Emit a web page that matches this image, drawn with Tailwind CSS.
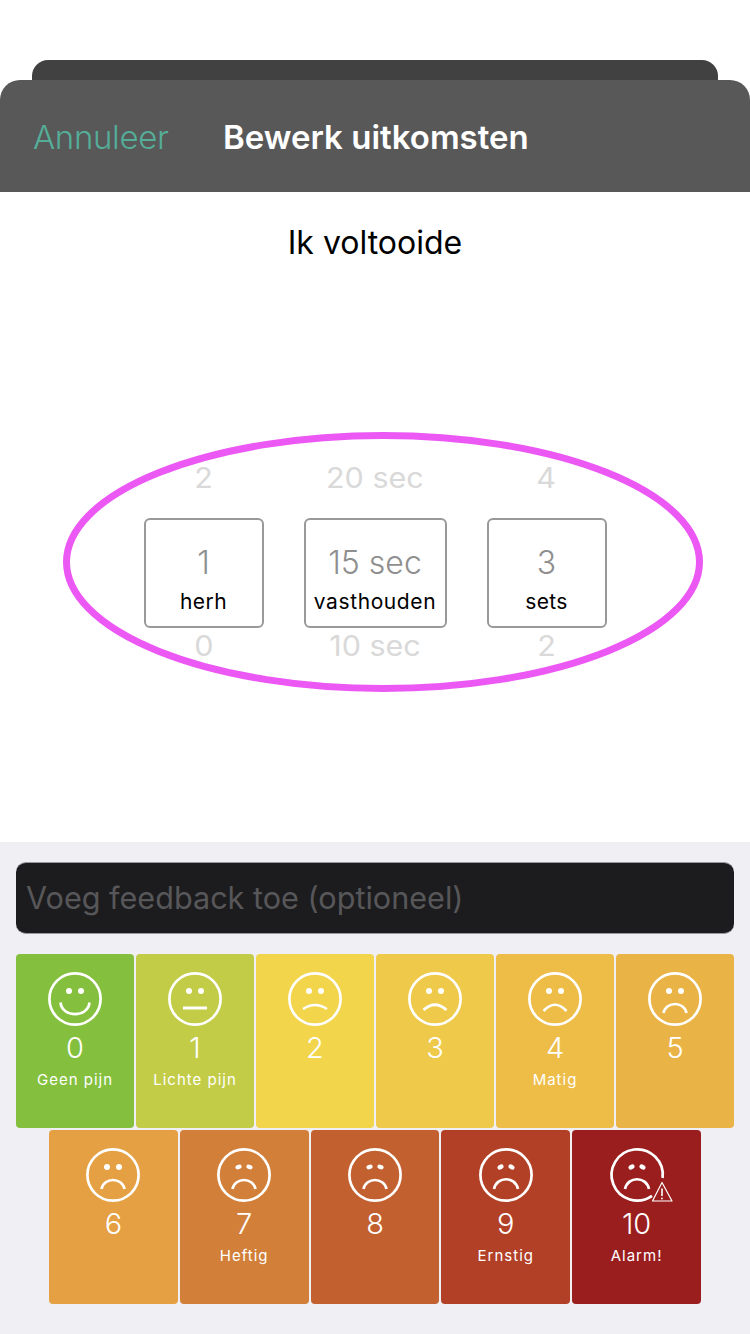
<!DOCTYPE html>
<html lang="en">
<head>
    <meta charset="UTF-8">
    <meta name="viewport" content="width=device-width, initial-scale=1.0">
    <title>Bewerk uitkomsten</title>
    <script src="https://cdn.jsdelivr.net/npm/@tailwindcss/browser@4"></script>
</head>
<body class="bg-white font-['Inter',sans-serif]">
<div class="w-[750px] h-[1334px] flex flex-col overflow-hidden">
    <div class="pt-[60px]">
        <div class="mx-[32px] h-[20px] bg-[#414141] rounded-t-[16px]"></div>
        <div class="h-[112px] bg-[#585858] rounded-t-[20px] flex items-center pl-[33px] pt-[1px] text-[33px] leading-[40px]">
            <span class="w-[190px] text-[#55ae98] font-light tracking-[-0.35px]">Annuleer</span>
            <span class="text-white font-semibold">Bewerk uitkomsten</span>
        </div>
    </div>

    <div class="relative flex-1 flex flex-col items-center">
        <p class="mt-[31px] text-[32px] leading-[40px] text-black">Ik voltooide</p>

        <div class="mt-[197px] flex gap-[40px] text-center">
            <div class="w-[120px]">
                <div class="h-[36px] leading-[36px] text-[28px] text-[#d9d9d9]"><span class="inline-block scale-x-[1.09]">2</span></div>
                <div class="mt-[22px] h-[110px] border-2 border-[#999999] rounded-[6px] flex flex-col items-center">
                    <span class="mt-[23px] h-[40px] leading-[40px] text-[32px] font-light text-[#8f8f8f]">1</span>
                    <span class="mt-[2px] text-[21px] leading-[34px] text-black tracking-[0.4px]">herh</span>
                </div>
                <div class="h-[36px] leading-[36px] text-[28px] text-[#d9d9d9]"><span class="inline-block scale-x-[1.09]">0</span></div>
            </div>
            <div class="w-[143px]">
                <div class="h-[36px] leading-[36px] text-[28px] text-[#d9d9d9]"><span class="inline-block scale-x-[1.09]">20 sec</span></div>
                <div class="mt-[22px] h-[110px] border-2 border-[#999999] rounded-[6px] flex flex-col items-center">
                    <span class="mt-[23px] h-[40px] leading-[40px] text-[32px] font-light text-[#8f8f8f]">15 sec</span>
                    <span class="mt-[2px] text-[21px] leading-[34px] text-black tracking-[0.6px]">vasthouden</span>
                </div>
                <div class="h-[36px] leading-[36px] text-[28px] text-[#d9d9d9]"><span class="inline-block scale-x-[1.09]">10 sec</span></div>
            </div>
            <div class="w-[120px]">
                <div class="h-[36px] leading-[36px] text-[28px] text-[#d9d9d9]"><span class="inline-block scale-x-[1.09]">4</span></div>
                <div class="mt-[22px] h-[110px] border-2 border-[#999999] rounded-[6px] flex flex-col items-center">
                    <span class="mt-[23px] h-[40px] leading-[40px] text-[32px] font-light text-[#8f8f8f]">3</span>
                    <span class="mt-[2px] text-[21px] leading-[34px] text-black tracking-[0.4px]">sets</span>
                </div>
                <div class="h-[36px] leading-[36px] text-[28px] text-[#d9d9d9]"><span class="inline-block scale-x-[1.09]">2</span></div>
            </div>
        </div>

        <!-- annotation drawn over the picker -->
        <svg class="absolute left-[60px] top-[237px]" width="646" height="266" viewBox="0 0 646 266" fill="none">
            <ellipse cx="323" cy="133" rx="316.5" ry="126.5" stroke="#ec58f4" stroke-width="7"/>
        </svg>
    </div>

    <div class="h-[492px] bg-[#efeff4] pt-[20px]">
        <div class="mx-[16px] h-[72px] bg-[#1c1c1e] rounded-[10px] border-t border-b border-[#9a9a9e] flex items-center pl-[10px] text-[30.6px] text-[#57575a]">Voeg feedback toe (optioneel)</div>

        <div class="mt-[20px] px-[16px] flex gap-[2px] text-white text-center">
            <div class="flex-1 h-[174px] rounded-[4px] bg-[#84c03e] flex flex-col items-center pt-[18px]">
                <svg width="54" height="54" viewBox="0 0 54 54" fill="none" stroke="white" stroke-width="2.7">
                    <circle cx="27" cy="27" r="25.6"/>
                    <circle cx="21" cy="19" r="3" fill="white" stroke="none"/><circle cx="33" cy="19" r="3" fill="white" stroke="none"/>
                    <path d="M12.5 30.5C14 46 40 46 41.5 30.5"/>
                </svg>
                <span class="mt-[2px] h-[40px] leading-[40px] text-[29px] font-light">0</span>
                <span class="text-[15px] leading-[24px] tracking-[1px]">Geen pijn</span>
            </div>
            <div class="flex-1 h-[174px] rounded-[4px] bg-[#c2cc47] flex flex-col items-center pt-[18px]">
                <svg width="54" height="54" viewBox="0 0 54 54" fill="none" stroke="white" stroke-width="2.7">
                    <circle cx="27" cy="27" r="25.6"/>
                    <circle cx="21" cy="19" r="3" fill="white" stroke="none"/><circle cx="33" cy="19" r="3" fill="white" stroke="none"/>
                    <path d="M15 36H39" stroke-width="3"/>
                </svg>
                <span class="mt-[2px] h-[40px] leading-[40px] text-[29px] font-light">1</span>
                <span class="text-[15px] leading-[24px] tracking-[1px]">Lichte pijn</span>
            </div>
            <div class="flex-1 h-[174px] rounded-[4px] bg-[#f2d54b] flex flex-col items-center pt-[18px]">
                <svg width="54" height="54" viewBox="0 0 54 54" fill="none" stroke="white" stroke-width="2.7">
                    <circle cx="27" cy="27" r="25.6"/>
                    <circle cx="21" cy="19" r="3" fill="white" stroke="none"/><circle cx="33" cy="19" r="3" fill="white" stroke="none"/>
                    <path d="M15 37Q27 29 39 37"/>
                </svg>
                <span class="mt-[2px] h-[40px] leading-[40px] text-[29px] font-light">2</span>
            </div>
            <div class="flex-1 h-[174px] rounded-[4px] bg-[#efc949] flex flex-col items-center pt-[18px]">
                <svg width="54" height="54" viewBox="0 0 54 54" fill="none" stroke="white" stroke-width="2.7">
                    <circle cx="27" cy="27" r="25.6"/>
                    <circle cx="21" cy="19" r="3" fill="white" stroke="none"/><circle cx="33" cy="19" r="3" fill="white" stroke="none"/>
                    <path d="M15.5 38Q27 27.5 38.5 38"/>
                </svg>
                <span class="mt-[2px] h-[40px] leading-[40px] text-[29px] font-light">3</span>
            </div>
            <div class="flex-1 h-[174px] rounded-[4px] bg-[#eebd47] flex flex-col items-center pt-[18px]">
                <svg width="54" height="54" viewBox="0 0 54 54" fill="none" stroke="white" stroke-width="2.7">
                    <circle cx="27" cy="27" r="25.6"/>
                    <circle cx="21" cy="19" r="3" fill="white" stroke="none"/><circle cx="33" cy="19" r="3" fill="white" stroke="none"/>
                    <path d="M15.5 39Q27 26.5 38.5 39"/>
                </svg>
                <span class="mt-[2px] h-[40px] leading-[40px] text-[29px] font-light">4</span>
                <span class="text-[15px] leading-[24px] tracking-[1px]">Matig</span>
            </div>
            <div class="flex-1 h-[174px] rounded-[4px] bg-[#e9b346] flex flex-col items-center pt-[18px]">
                <svg width="54" height="54" viewBox="0 0 54 54" fill="none" stroke="white" stroke-width="2.7">
                    <circle cx="27" cy="27" r="25.6"/>
                    <circle cx="21" cy="19" r="3" fill="white" stroke="none"/><circle cx="33" cy="19" r="3" fill="white" stroke="none"/>
                    <path d="M15.5 41C18 29 36 29 38.5 41"/>
                </svg>
                <span class="mt-[2px] h-[40px] leading-[40px] text-[29px] font-light">5</span>
            </div>
        </div>

        <div class="mt-[2px] px-[49px] flex gap-[2px] text-white text-center">
            <div class="flex-1 h-[174px] rounded-[4px] bg-[#e4a042] flex flex-col items-center pt-[18px]">
                <svg width="54" height="54" viewBox="0 0 54 54" fill="none" stroke="white" stroke-width="2.7">
                    <circle cx="27" cy="27" r="25.6"/>
                    <circle cx="21" cy="19" r="3" fill="white" stroke="none"/><circle cx="33" cy="19" r="3" fill="white" stroke="none"/>
                    <path d="M15.5 41C18 29 36 29 38.5 41"/>
                </svg>
                <span class="mt-[2px] h-[40px] leading-[40px] text-[29px] font-light">6</span>
            </div>
            <div class="flex-1 h-[174px] rounded-[4px] bg-[#d17f39] flex flex-col items-center pt-[18px]">
                <svg width="54" height="54" viewBox="0 0 54 54" fill="none" stroke="white" stroke-width="2.7">
                    <circle cx="27" cy="27" r="25.6"/>
                    <ellipse cx="21.5" cy="19" rx="3.2" ry="2.2" transform="rotate(-20 21.5 19)" fill="white" stroke="none"/><ellipse cx="32.5" cy="19" rx="3.2" ry="2.2" transform="rotate(20 32.5 19)" fill="white" stroke="none"/>
                    <path d="M15.5 41C18 29 36 29 38.5 41"/>
                </svg>
                <span class="mt-[2px] h-[40px] leading-[40px] text-[29px] font-light">7</span>
                <span class="text-[15px] leading-[24px] tracking-[1px]">Heftig</span>
            </div>
            <div class="flex-1 h-[174px] rounded-[4px] bg-[#c26030] flex flex-col items-center pt-[18px]">
                <svg width="54" height="54" viewBox="0 0 54 54" fill="none" stroke="white" stroke-width="2.7">
                    <circle cx="27" cy="27" r="25.6"/>
                    <ellipse cx="21.5" cy="19" rx="3.2" ry="2.2" transform="rotate(-20 21.5 19)" fill="white" stroke="none"/><ellipse cx="32.5" cy="19" rx="3.2" ry="2.2" transform="rotate(20 32.5 19)" fill="white" stroke="none"/>
                    <path d="M15.5 41C18 29 36 29 38.5 41"/>
                </svg>
                <span class="mt-[2px] h-[40px] leading-[40px] text-[29px] font-light">8</span>
            </div>
            <div class="flex-1 h-[174px] rounded-[4px] bg-[#b24027] flex flex-col items-center pt-[18px]">
                <svg width="54" height="54" viewBox="0 0 54 54" fill="none" stroke="white" stroke-width="2.7">
                    <circle cx="27" cy="27" r="25.6"/>
                    <ellipse cx="21.5" cy="19" rx="3.2" ry="2.3" transform="rotate(-28 21.5 19)" fill="white" stroke="none"/><ellipse cx="32.5" cy="19" rx="3.2" ry="2.3" transform="rotate(28 32.5 19)" fill="white" stroke="none"/>
                    <path d="M15 41C18 28 36 28 39 41"/>
                </svg>
                <span class="mt-[2px] h-[40px] leading-[40px] text-[29px] font-light">9</span>
                <span class="text-[15px] leading-[24px] tracking-[1px]">Ernstig</span>
            </div>
            <div class="flex-1 h-[174px] rounded-[4px] bg-[#9b1e1f] flex flex-col items-center pt-[18px]">
                <svg class="overflow-visible" width="54" height="54" viewBox="0 0 54 54" fill="none" stroke="white" stroke-width="2.7">
                    <path d="M52.6 30A25.6 25.6 0 1 0 42 47.8"/>
                    <ellipse cx="21.5" cy="19" rx="3.2" ry="2.3" transform="rotate(-28 21.5 19)" fill="white" stroke="none"/><ellipse cx="32.5" cy="19" rx="3.2" ry="2.3" transform="rotate(28 32.5 19)" fill="white" stroke="none"/>
                    <path d="M15 41C18 28 36 28 39 41"/>
                    <path d="M52 34.5L42.5 53H62Z" stroke-width="1.2" stroke-linejoin="round"/>
                    <path d="M52 40.5V48" stroke-width="1.6"/>
                    <circle cx="52" cy="50.5" r="0.9" fill="white" stroke="none"/>
                </svg>
                <span class="mt-[2px] h-[40px] leading-[40px] text-[29px] font-light">10</span>
                <span class="text-[15px] leading-[24px] tracking-[1px]">Alarm!</span>
            </div>
        </div>
    </div>
</div>
</body>
</html>
